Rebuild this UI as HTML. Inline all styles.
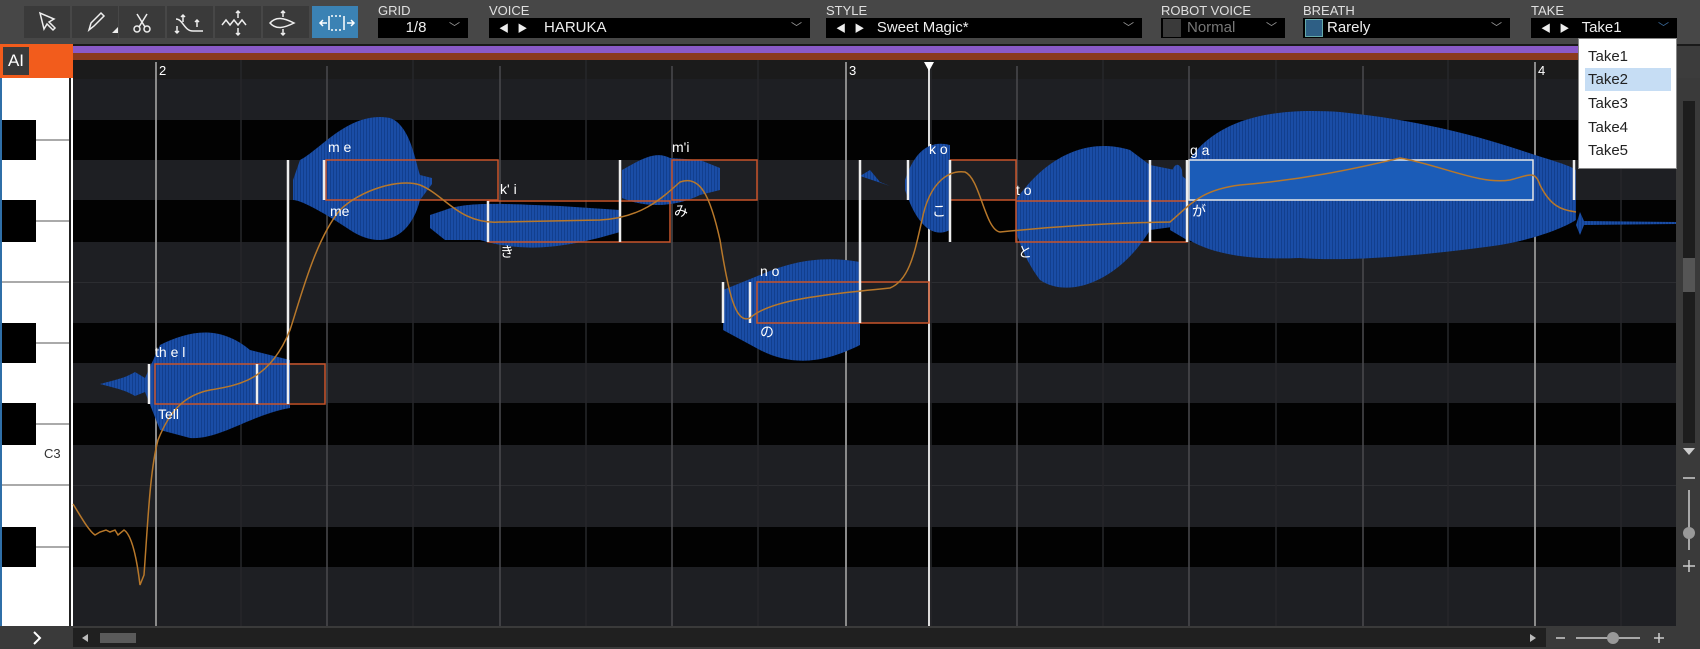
<!DOCTYPE html>
<html><head><meta charset="utf-8"><style>
*{margin:0;padding:0;box-sizing:border-box}
body{width:1700px;height:649px;overflow:hidden;background:#3c3c3c;font-family:"Liberation Sans","Noto Sans CJK JP",sans-serif;position:relative}
.a{position:absolute}
.btn{position:absolute;top:6px;width:46px;height:32px;background:#3a3a3a}
.lbl{position:absolute;top:3px;font-size:13px;color:#e0e0e0}
.dd{position:absolute;top:18px;height:20px;background:#000;color:#eee;font-size:15px;line-height:20px}
.chev{position:absolute;right:8px;top:0;color:#999;font-size:11px}
.mi{position:absolute;left:0;width:100%;height:23px;font-size:15px;color:#222;padding-left:9px;line-height:23px}
</style></head><body>
<div class="a" style="left:0;top:0;width:1700px;height:44px;background:#474747"></div>
<div class="btn" style="left:24px"></div><div class="btn" style="left:72px"></div><div class="btn" style="left:119px"></div><div class="btn" style="left:167px"></div><div class="btn" style="left:215px"></div><div class="btn" style="left:263px"></div><div class="btn" style="left:312px;background:#3b82b4"></div>
<svg class="a" style="left:0;top:0" width="370" height="44" fill="none" stroke="#eee" stroke-width="1.5">
<path d="M40 13 L44 29 L47 24 L53 30 L55 28 L49 22 L54 19 Z"/>
<path d="M89 30 L91 23 L101 13 L104 16 L94 26 Z"/><path d="M112 33 L118 27 L118 33 Z" fill="#eee" stroke="none"/>
<circle cx="137" cy="29" r="3"/><circle cx="147" cy="29" r="3"/><path d="M139 27 L147 14 M145 27 L137 14"/>
<path d="M176 19 C183 19 184 31 193 31 L203 31 M183 15 L183 22 M181 17 L183 15 L185 17 M177 26 L177 33 M175 31 L177 33 L179 31 M197 20 L197 27 M195 22 L197 20 L199 22"/>
<path d="M222 25 L226 20 L230 25 L234 20 L238 25 L242 20 L246 25 M238 11 L238 18 M236 13 L238 11 L240 13 M238 28 L238 35 M236 33 L238 35 L240 33"/>
<path d="M270 23 C276 16 284 18 294 23 C284 28 276 30 270 23 Z M283 11 L283 17 M281 13 L283 11 L285 13 M283 29 L283 35 M281 33 L283 35 L285 33"/>
<path d="M320 23 L327 23 M323 20 L320 23 L323 26 M329 16 L329 30 M344 16 L344 30 M347 23 L354 23 M351 20 L354 23 L351 26" stroke="#fff"/>
<path d="M331 16 H342 M331 30 H342" stroke="#fff" stroke-dasharray="2 2"/>
</svg>
<div class="lbl" style="left:378px">GRID</div>
<div class="dd" style="left:378px;width:90px;text-align:center;padding-right:14px">1/8<span class="chev">﹀</span></div>
<div class="lbl" style="left:489px">VOICE</div>
<div class="dd" style="left:489px;width:321px;padding-left:10px"><span style="font-size:10px">◀ &nbsp; ▶</span>&nbsp;&nbsp;&nbsp; HARUKA<span class="chev">﹀</span></div>
<div class="lbl" style="left:826px">STYLE</div>
<div class="dd" style="left:826px;width:316px;padding-left:10px"><span style="font-size:10px">◀ &nbsp; ▶</span>&nbsp;&nbsp; Sweet Magic*<span class="chev">﹀</span></div>
<div class="lbl" style="left:1161px">ROBOT VOICE</div>
<div class="dd" style="left:1161px;width:124px;color:#777;padding-left:26px"><span class="a" style="left:2px;top:1px;width:18px;height:18px;background:#3a3a3a"></span>Normal<span class="chev">﹀</span></div>
<div class="lbl" style="left:1303px">BREATH</div>
<div class="dd" style="left:1303px;width:207px;padding-left:24px"><span class="a" style="left:2px;top:1px;width:18px;height:18px;background:#2e5f85;border:1px solid #6aa"></span>Rarely<span class="chev">﹀</span></div>
<div class="lbl" style="left:1531px">TAKE</div>
<div class="dd" style="left:1531px;width:146px;padding-left:10px"><span style="font-size:10px">◀ &nbsp; ▶</span>&nbsp;&nbsp; Take1<span class="chev" style="color:#3a6a9a">﹀</span></div>

<div class="a" style="left:0;top:44px;width:73px;height:34px;background:#f25c1c"></div>
<div class="a" style="left:3px;top:47px;width:26px;height:28px;background:#3a3a3a;color:#fff;font-size:17px;line-height:28px;text-align:center">AI</div>
<div class="a" style="left:73px;top:44px;width:1627px;height:2px;background:#1a1a1a"></div>
<div class="a" style="left:73px;top:46px;width:1603px;height:7px;background:#8a5ac8"></div>
<div class="a" style="left:73px;top:53px;width:1603px;height:7px;background:#8a3a1e"></div>
<div class="a" style="left:73px;top:60px;width:1603px;height:19px;background:#1b1b1b"></div>

<div class="a" style="left:0;top:78px;width:73px;height:548px;background:#fff;border-left:2px solid #2f6fa8"></div>

<svg class="a" style="left:0;top:0" width="1700" height="649">
<defs>
<pattern id="st" width="3" height="10" patternUnits="userSpaceOnUse"><rect width="3" height="10" fill="#1a4da6"/><rect width="1" height="10" fill="#123f8e"/></pattern>
</defs>
<g>
<rect x="73" y="79" width="1603" height="547" fill="#1e1f23"/>
<rect x="73" y="120" width="1603" height="40" fill="#020202"/>
<rect x="73" y="200" width="1603" height="42" fill="#020202"/>
<rect x="73" y="323" width="1603" height="40" fill="#020202"/>
<rect x="73" y="403" width="1603" height="42" fill="#020202"/>
<rect x="73" y="527" width="1603" height="40" fill="#020202"/>
<path d="M73 282.5H1676M73 485.5H1676" stroke="#2c2d31"/>
</g>
<g fill="#000"><rect x="2" y="120" width="34" height="40"/><rect x="2" y="200" width="34" height="42"/><rect x="2" y="323" width="34" height="40"/><rect x="2" y="403" width="34" height="42"/><rect x="2" y="527" width="34" height="40"/></g>
<path d="M36 140H70M36 221H70M2 282H70M36 343H70M36 424H70M2 485H70M36 547H70" stroke="#555"/>
<path d="M70 78V626" stroke="#222" stroke-width="2"/>
<text x="44" y="458" font-size="13" fill="#333" font-family="Liberation Sans">C3</text>
<g stroke="#26272b" stroke-width="1.5">
<path d="M241 60V626M413 60V626M586 60V626M758 60V626M931 60V626M1103 60V626M1276 60V626M1448 60V626M1621 60V626"/></g>
<g stroke="#4a4a4e" stroke-width="1.5"><path d="M327 66V626M500 66V626M672 66V626M1017 66V626M1189 66V626M1363 66V626"/></g>
<g stroke="#8a8a8a" stroke-width="2"><path d="M156 62V626M846 62V626M1535 62V626"/></g>
<g fill="#fff" font-size="13" font-family="Liberation Sans"><text x="159" y="75">2</text><text x="849" y="75">3</text><text x="1538" y="75">4</text></g>
<path d="M929 62V626" stroke="#ddd" stroke-width="2"/><path d="M924 62H934L929 71Z" fill="#fff"/>
<g fill="url(#st)">
<path d="M100 384 C115 380 125 378 135 372 L145 378 L160 345 C190 330 220 325 250 350 L290 360 L290 408 C250 415 220 440 190 438 L160 430 L145 392 L135 396 C125 390 115 388 100 384Z"/>
<path d="M293 180 L300 160 C320 150 350 110 390 118 C410 125 415 160 420 175 L432 178 L432 184 L420 200 C410 240 380 250 350 230 C320 210 300 200 293 200Z"/>
<path d="M430 215 L445 210 C470 200 520 205 560 206 L620 210 L620 232 C560 250 520 252 480 240 L445 240 L430 228Z"/>
<path d="M622 170 C640 160 655 150 670 158 L700 160 L720 168 L720 190 L700 195 C680 205 650 210 622 198Z"/>
<path d="M723 290 L760 275 C790 262 820 255 860 262 L860 345 C820 365 790 365 760 350 L723 330Z"/>
<path d="M860 176 L870 170 L880 182 L890 186Z"/>
<path d="M905 180 C915 150 930 140 950 145 L950 230 C930 240 915 220 905 190Z"/>
<path d="M1016 200 C1040 165 1080 135 1130 150 L1150 165 L1175 170 L1187 180 L1187 225 L1150 230 C1120 280 1070 300 1040 280 C1025 260 1018 240 1016 230Z"/>
<path d="M1170 180 C1172 165 1178 160 1182 170 L1187 240 L1170 230Z"/>
<path d="M1189 160 C1220 115 1280 108 1340 112 C1400 118 1460 130 1520 150 C1550 160 1570 165 1576 170 L1576 220 C1560 230 1530 240 1500 245 C1430 255 1350 262 1300 258 C1250 260 1215 255 1189 240Z"/>
<path d="M1576 225 L1580 212 L1584 221 L1676 222 L1676 224 L1584 225 L1580 235Z"/>
</g>
<g fill="none" stroke="#c8542a" stroke-width="1.5">
<rect x="155" y="364" width="170" height="40"/>
<rect x="326" y="160" width="172" height="40"/>
<rect x="488" y="201" width="182" height="41"/>
<rect x="672" y="160" width="85" height="40"/>
<rect x="757" y="282" width="172" height="41"/>
<rect x="950" y="160" width="66" height="40"/>
<rect x="1016" y="201" width="171" height="41"/>
</g>
<rect x="1189" y="160" width="344" height="40" fill="#1b5cb8" stroke="#e8e8e8" stroke-width="1.5"/>
<g stroke="#eee" stroke-width="2.5">
<path d="M149 364V404M257 364V404M288 160V404M324 160V200M488 201V242M620 160V242M723 282V323M750 282V323M860 160V323M908 160V200M950 160V242M1150 160V242M1187 160V242M1574 160V200"/>
</g>
<path d="M73 504 C80 515 88 530 95 535 L100 532 L106 530 L110 532 L115 530 L118 535 L124 530 C132 535 137 560 140 585 L144 575 C148 520 150 470 158 440 C170 410 185 395 210 390 C240 385 270 380 290 330 C300 300 315 240 340 210 C360 190 400 178 420 185 C445 195 460 225 500 222 L600 220 C640 218 660 200 680 182 C700 175 710 195 720 240 C728 290 735 325 750 318 C770 300 820 295 890 288 C910 280 915 250 922 220 C930 180 950 170 965 172 C980 178 985 230 1000 232 C1040 228 1100 223 1170 222 C1190 205 1200 190 1240 185 C1300 180 1350 170 1400 158 C1440 165 1480 185 1510 180 C1530 175 1535 170 1540 185 C1550 205 1560 210 1576 212" fill="none" stroke="#b8782a" stroke-width="1.5"/>
<g fill="#fff" font-size="14" font-family="Liberation Sans, Noto Sans CJK JP, sans-serif">
<text x="155" y="357">th e  l</text><text x="158" y="419">Tell</text>
<text x="328" y="152">m e</text><text x="330" y="216">me</text>
<text x="500" y="194">k' i</text><text x="500" y="257">き</text>
<text x="672" y="152">m'i</text><text x="674" y="216">み</text>
<text x="760" y="276">n o</text><text x="760" y="337">の</text>
<text x="929" y="154">k  o</text><text x="932" y="216">こ</text>
<text x="1016" y="195">t  o</text><text x="1018" y="257">と</text>
<text x="1190" y="155">g  a</text><text x="1192" y="216">が</text>
</g>
<rect x="0" y="626" width="1700" height="23" fill="#3a3a3a"/>
<rect x="73" y="628" width="1473" height="19" fill="#202020"/>
<rect x="100" y="633" width="36" height="10" fill="#5a5a5a"/>
<path d="M34 632L40 638L34 644" stroke="#fff" stroke-width="2" fill="none"/>
<path d="M88 634L82 638L88 642Z" fill="#bbb"/><path d="M1530 634L1536 638L1530 642Z" fill="#bbb"/>
<path d="M1556 638H1565M1576 638H1640M1654 638H1664M1659 633V643" stroke="#ccc" stroke-width="1.5"/>
<circle cx="1613" cy="638" r="6" fill="#999"/>
<rect x="1676" y="78" width="24" height="548" fill="#3a3a3a"/>
<path d="M1683 111L1689 104L1695 111Z" fill="#ccc"/>
<rect x="1683" y="101" width="12" height="342" fill="#1d1d1d"/>
<rect x="1683" y="258" width="12" height="34" fill="#555"/>
<path d="M1683 448L1689 455L1695 448Z" fill="#ccc"/>
<path d="M1683 478H1695M1689 490V550M1683 566H1695M1689 560V572" stroke="#ccc" stroke-width="1.5"/>
<circle cx="1689" cy="533" r="6" fill="#999"/>
</svg>
<div class="a" style="left:1578px;top:38px;width:99px;height:131px;background:#fff;border:1px solid #888">
<div class="mi" style="top:6px">Take1</div>
<div class="mi" style="top:29px;left:6px;width:86px;padding-left:3px;background:#c6ddf4">Take2</div>
<div class="mi" style="top:53px">Take3</div>
<div class="mi" style="top:77px">Take4</div>
<div class="mi" style="top:100px">Take5</div>
</div>
</body></html>
